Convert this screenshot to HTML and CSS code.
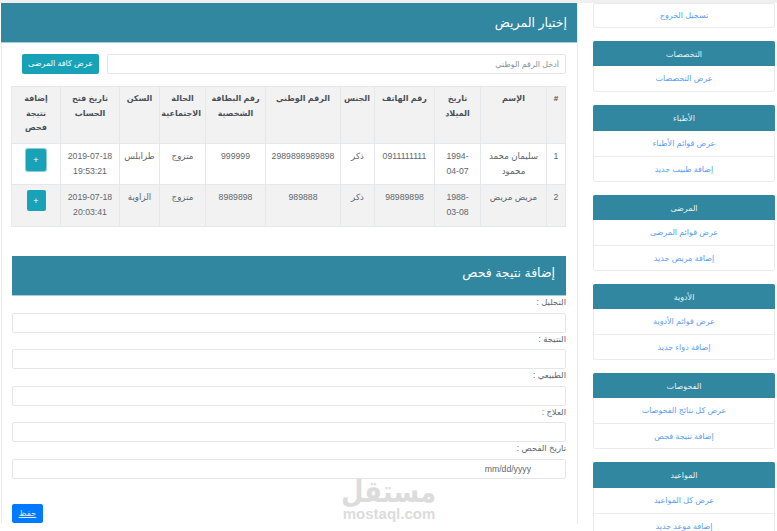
FILE: index.html
```html
<!DOCTYPE html>
<html lang="ar" dir="rtl">
<head>
<meta charset="utf-8">
<title>إختيار المريض</title>
<link rel="stylesheet" href="styles.css">
</head>
<body>
<div class="topstrip"></div>
<div class="layout">
  <main class="main">
    <header class="main-head"><h1>إختيار المريض</h1></header>
    <div class="search-row">
      <input class="control search" type="text" placeholder="أدخل الرقم الوطني">
      <a class="btn-info" href="#">عرض كافة المرضى</a>
    </div>
    <table class="patients">
      <colgroup>
        <col class="c1"><col class="c2"><col class="c3"><col class="c4"><col class="c5"><col class="c6"><col class="c7"><col class="c8"><col class="c9"><col class="c10"><col class="c11">
      </colgroup>
      <thead>
        <tr><th>#</th><th>الإسم</th><th>تاريخ الميلاد</th><th>رقم الهاتف</th><th>الجنس</th><th>الرقم الوطني</th><th>رقم البطاقة الشخصية</th><th>الحالة الاجتماعية</th><th>السكن</th><th>تاريخ فتح الحساب</th><th>إضافة نتيجة فحص</th></tr>
      </thead>
      <tbody>
        <tr class="odd"><td>1</td><td>سليمان محمد محمود</td><td class="birth">1994-04-07</td><td>0911111111</td><td>ذكر</td><td>2989898989898</td><td>999999</td><td>متزوج</td><td>طرابلس</td><td>2019-07-18 19:53:21</td><td><button class="plus focused">+</button></td></tr>
        <tr class="even"><td>2</td><td>مريض مريض</td><td class="birth">1988-03-08</td><td>98989898</td><td>ذكر</td><td>989888</td><td>8989898</td><td>متزوج</td><td>الزاوية</td><td>2019-07-18 20:03:41</td><td><button class="plus">+</button></td></tr>
      </tbody>
    </table>
    <section class="exam">
      <h2>إضافة نتيجة فحص</h2>
      <form class="exam-form">
        <label>التحليل :</label><input class="control" type="text">
        <label>النتيجة :</label><input class="control" type="text">
        <label>الطبيعي :</label><input class="control" type="text">
        <label>العلاج :</label><input class="control" type="text">
        <label>تاريخ الفحص :</label><div class="control date"><span dir="ltr">mm/dd/yyyy</span></div>
        <a class="save" href="#">حفظ</a>
      </form>
    </section>
  </main>
  <aside class="side">
    <div class="card logout"><a href="#">تسجيل الخروج</a></div>
    <div class="card"><h3>التخصصات</h3><a href="#">عرض التخصصات</a></div>
    <div class="card"><h3>الأطباء</h3><a href="#">عرض قوائم الأطباء</a><a href="#">إضافة طبيب جديد</a></div>
    <div class="card"><h3>المرضى</h3><a href="#">عرض قوائم المرضى</a><a href="#">إضافة مريض جديد</a></div>
    <div class="card"><h3>الأدوية</h3><a href="#">عرض قوائم الأدوية</a><a href="#">إضافة دواء جديد</a></div>
    <div class="card"><h3>الفحوصات</h3><a href="#">عرض كل نتائج الفحوصات</a><a href="#">إضافة نتيجة فحص</a></div>
    <div class="card"><h3>المواعيد</h3><a href="#">عرض كل المواعيد</a><a href="#">إضافة موعد جديد</a></div>
  </aside>
</div>
<div class="watermark"><div class="wm-ar">مستقل</div><div class="wm-en" dir="ltr">mostaql.com</div></div>
</body>
</html>
```
FILE: styles.css
```css
* { box-sizing: border-box; }
html, body { margin: 0; height: 531px; overflow: hidden; background: #fff; }
body { font-family: "Liberation Sans", "DejaVu Sans", sans-serif; font-size: 9px; color: #5f666c; position: relative; }
.topstrip { height: 3px; background: #efefef; }
.layout { display: flex; direction: ltr; height: 528px; padding-left: 1px; }
.main { direction: rtl; width: 577px; height: 521px; border-right: 1px solid #e9ecef; box-shadow: inset 1px 0 0 #e9ecef; flex: none; }
.side { direction: rtl; width: 182px; margin-left: 15px; flex: none; display: flex; flex-direction: column; gap: 13px; }
.main-head { height: 40px; background: #31879f; color: #fff; display: flex; align-items: center; padding: 0 10px; border-bottom: 1px solid #a9cdd8; }
h1 { margin: 0; font-size: 12.5px; font-weight: 400; }
.search-row { display: flex; gap: 8px; margin: 11px 11px 0 21px; }
.control { display: block; height: 20px; border: 1px solid #e3e6e9; border-radius: 2px; background: #fff; font: inherit; color: #666; padding: 0 6px; width: 100%; outline: 0; }
.search { flex: 1; min-width: 0; font-size: 8px; }
.search::placeholder { color: #8a8f94; }
.btn-info { flex: none; width: 77px; height: 20px; line-height: 19px; text-align: center; background: #17a2b8; color: #fff; border-radius: 2px; text-decoration: none; font-size: 8px; }
.patients { width: 554px; margin: 12px 11px 0 0; border-collapse: collapse; table-layout: fixed; line-height: 14.5px; }
.c1 { width: 19px; } .c2 { width: 66px; } .c3 { width: 46px; } .c4 { width: 60px; } .c5 { width: 34px; } .c6 { width: 75px; } .c7 { width: 60px; } .c8 { width: 46px; } .c9 { width: 40px; } .c10 { width: 59px; } .c11 { width: 49px; }
.patients th, .patients td { border: 1px solid #e5e8eb; padding: 5px 4px 0; text-align: center; vertical-align: top; overflow: hidden; }
.patients th { height: 57px; background: #f2f2f2; color: #4a5056; font-weight: 700; font-size: 8px; }
.patients td { height: 41px; font-size: 8.7px; }
.patients .birth { padding-left: 8px; padding-right: 8px; }
.patients .even td { background: #f2f2f2; height: 42px; }
.plus { display: block; margin: 0 auto; width: 19px; height: 21px; padding: 0; border: 0; border-radius: 2px; background: #17a2b8; color: #fff; font: 9px "Liberation Sans", sans-serif; }
.focused { width: 20px; height: 22px; box-shadow: 0 0 0 1px #8fc9d6; }
.exam { margin: 29px 11px 0 0; width: 554px; }
h2 { margin: 0; height: 40px; line-height: 34px; padding: 0 11px; font-size: 12.5px; font-weight: 400; background: #31879f; color: #fff; border-bottom: 1px solid #a9cdd8; }
.exam-form { display: block; }
.exam-form label { display: block; height: 16.5px; line-height: 13px; font-size: 8.5px; color: #5f666c; }
.date { display: flex; align-items: center; justify-content: flex-start; font-size: 8.7px; padding-right: 34px; }
.save { display: block; width: 31px; height: 19px; line-height: 18px; margin: 25px 523px 0 0; text-align: center; background: #007bff; color: #dfeeff; border-radius: 2px; font-size: 8.5px; }
.card { background: #fff; border: 1px solid #e9ebed; border-radius: 2px; flex: none; }
.card h3 { margin: -1px -1px 0; height: 25.25px; line-height: 27px; text-align: center; background: #31879f; color: #e8f2f5; font-size: 8px; font-weight: 400; border-radius: 2px 2px 0 0; }
.card a { display: block; height: 25px; line-height: 25px; text-align: center; color: #5a9df5; text-decoration: none; font-size: 8px; border-top: 1px solid #e9ebed; }
.card a:first-child, .card h3 + a { border-top: 0; }
.logout a { height: 23px; line-height: 24px; }
.watermark { position: absolute; left: 342px; top: 478px; width: 94px; text-align: center; color: #dcdcdc; pointer-events: none; }
.wm-ar { font-size: 26px; line-height: 28px; font-weight: 700; transform: scaleY(1.15); }
.wm-en { font-size: 15px; line-height: 15px; font-weight: 700; }
```
